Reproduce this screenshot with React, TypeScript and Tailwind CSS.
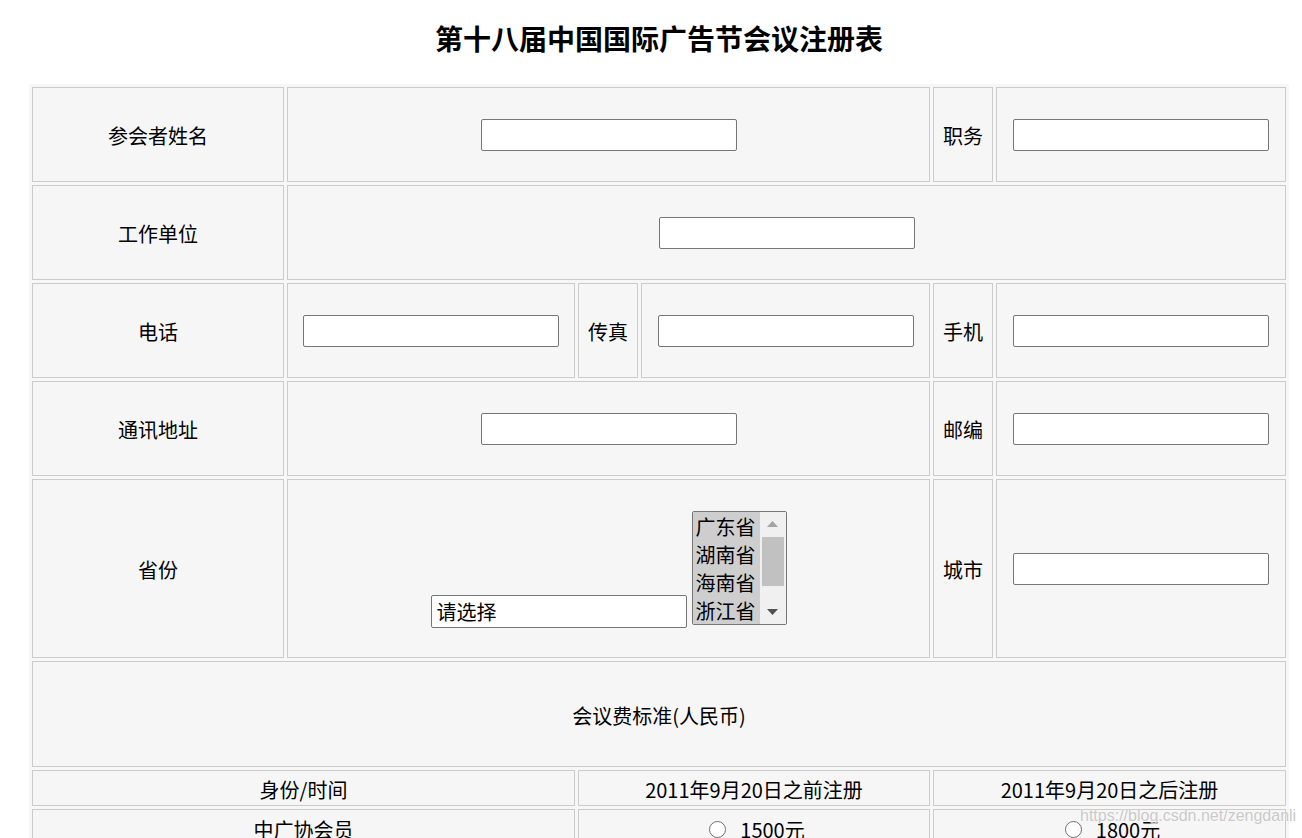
import React from "react";

const cell =
  "flex items-center justify-center border border-[#cbcbcb] bg-[#f6f6f6] text-[20px] text-black";
const label = `${cell} pt-[3px]`;

function TextInput() {
  return (
    <input
      type="text"
      className="h-[32px] w-[256px] rounded-[2px] border border-[#767676] bg-white px-[5px] text-[20px] outline-none"
    />
  );
}

function Radio({ label: text }: { label: string }) {
  return (
    <div className="flex items-center gap-[14px] pl-[6px]">
      <span className="block h-[17px] w-[17px] rounded-full border border-[#6f6f6f] bg-white" />
      <span className="leading-[28px]">{text}</span>
    </div>
  );
}

function ListBox() {
  const opts = ["广东省", "湖南省", "海南省", "浙江省"];
  return (
    <div className="mb-[3px] flex h-[114px] w-[95px] overflow-hidden rounded-[2px] border border-[#767676] bg-white">
      <div className="flex w-[67px] flex-col bg-[#cecece]">
        {opts.map((o) => (
          <div key={o} className="h-[28px] pl-[3px] pt-[1px] text-[20px] leading-[28px] text-black whitespace-nowrap">
            {o}
          </div>
        ))}
      </div>
      <div className="flex w-[26px] flex-col bg-[#f0f0f0]">
        <div className="flex h-[24px] items-center justify-center">
          <svg width="11" height="6" viewBox="0 0 11 6">
            <polygon points="0,6 11,6 5.5,0" fill="#a3a3a3" />
          </svg>
        </div>
        <div className="flex-1 px-[2px] pt-[1px]">
          <div className="h-[49px] bg-[#c1c1c1]" />
        </div>
        <div className="flex h-[24px] items-center justify-center">
          <svg width="11" height="6" viewBox="0 0 11 6">
            <polygon points="0,0 11,0 5.5,6" fill="#505050" />
          </svg>
        </div>
      </div>
    </div>
  );
}

export default function App() {
  return (
    <div className="relative min-h-[838px] bg-white font-['Noto_Sans_CJK_SC','Microsoft_YaHei',sans-serif] text-black">
      <div className="ml-[29px] h-[84px] w-[1260px] pt-[18px] text-center text-[28px] font-bold leading-[40px]">
        第十八届中国国际广告节会议注册表
      </div>

      <div className="ml-[29px] grid w-[1260px] grid-cols-[252px_288px_60px_289px_60px_290px] grid-rows-[95px_95px_95px_95px_179px_106px_36px_38px] gap-[3px] bg-[#f7f7f7] p-[3px]">
        {/* row 1 */}
        <div className={label}>参会者姓名</div>
        <div className={`${cell} col-span-3`}>
          <TextInput />
        </div>
        <div className={label}>职务</div>
        <div className={cell}>
          <TextInput />
        </div>

        {/* row 2 */}
        <div className={label}>工作单位</div>
        <div className={`${cell} col-span-5`}>
          <TextInput />
        </div>

        {/* row 3 */}
        <div className={label}>电话</div>
        <div className={cell}>
          <TextInput />
        </div>
        <div className={label}>传真</div>
        <div className={cell}>
          <TextInput />
        </div>
        <div className={label}>手机</div>
        <div className={cell}>
          <TextInput />
        </div>

        {/* row 4 */}
        <div className={label}>通讯地址</div>
        <div className={`${cell} col-span-3`}>
          <TextInput />
        </div>
        <div className={label}>邮编</div>
        <div className={cell}>
          <TextInput />
        </div>

        {/* row 5 */}
        <div className={label}>省份</div>
        <div className={`${cell} col-span-3`}>
          <div className="mt-[2px] flex items-end gap-[5px]">
            <input
              type="text"
              readOnly
              value="请选择"
              className="h-[33px] w-[256px] rounded-[2px] border border-[#767676] bg-white pl-[5px] text-[20px] leading-[31px] text-black outline-none"
            />
            <ListBox />
          </div>
        </div>
        <div className={label}>城市</div>
        <div className={cell}>
          <TextInput />
        </div>

        {/* row 6 */}
        <div className={`${label} col-span-6`}>会议费标准(人民币)</div>

        {/* row 7 */}
        <div className={`${label} col-span-2`}>身份/时间</div>
        <div className={`${label} col-span-2`}>2011年9月20日之前注册</div>
        <div className={`${label} col-span-2`}>2011年9月20日之后注册</div>

        {/* row 8 */}
        <div className={`${label} col-span-2`}>中广协会员</div>
        <div className={`${label} col-span-2`}>
          <Radio label="1500元" />
        </div>
        <div className={`${label} col-span-2`}>
          <Radio label="1800元" />
        </div>
      </div>

      <div className="pointer-events-none absolute left-[1080px] top-[806px] font-['Liberation_Sans',sans-serif] text-[16px] leading-[19px] text-[#c9c9c9] [text-shadow:0_0_2px_#ffffff]">
        https://blog.csdn.net/zengdanli
      </div>
    </div>
  );
}
